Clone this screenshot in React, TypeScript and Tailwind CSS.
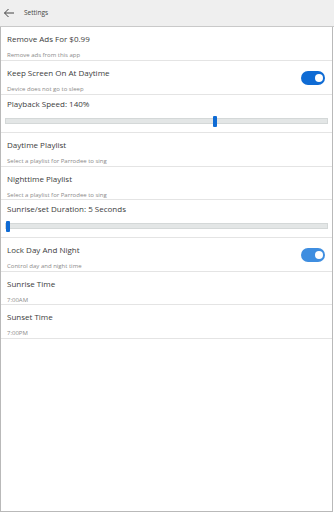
import React from "react";

type Row =
  | { kind: "text"; title: string; sub?: string; toggle?: "dark" | "light"; h: string }
  | { kind: "slider"; title: string; pos: number; h: string };

const rows: Row[] = [
  { kind: "text", title: "Remove Ads For $0.99", sub: "Remove ads from this app", h: "h-[34px]" },
  { kind: "text", title: "Keep Screen On At Daytime", sub: "Device does not go to sleep", toggle: "dark", h: "h-[34px]" },
  { kind: "slider", title: "Playback Speed: 140%", pos: 207, h: "h-[38px]" },
  { kind: "text", title: "Daytime Playlist", sub: "Select a playlist for Parrodee to sing", h: "h-[34px]" },
  { kind: "text", title: "Nighttime Playlist", sub: "Select a playlist for Parrodee to sing", h: "h-[33px]" },
  { kind: "slider", title: "Sunrise/set Duration: 5 Seconds", pos: 0, h: "h-[38px]" },
  { kind: "text", title: "Lock Day And Night", sub: "Control day and night time", toggle: "light", h: "h-[34px]" },
  { kind: "text", title: "Sunrise Time", sub: "7:00AM", h: "h-[33px]" },
  { kind: "text", title: "Sunset Time", sub: "7:00PM", h: "h-[34px]" },
];

function Toggle({ tone }: { tone: "dark" | "light" }) {
  return (
    <div
      className={
        tone === "dark"
          ? "flex items-center justify-end w-[24px] h-[14px] rounded-full bg-[#0f6bd4] pr-[2px]"
          : "flex items-center justify-end w-[24px] h-[14px] rounded-full bg-[#3f8ee0] pr-[2px]"
      }
    >
      <div className="w-[8px] h-[8px] rounded-full bg-white" />
    </div>
  );
}

function Slider({ pos }: { pos: number }) {
  return (
    <div className="relative mx-[4px] h-[6px] bg-[#e3e6e6] border border-[#d4d8d8]">
      <div
        className="absolute top-[-3px] w-[4px] h-[11px] bg-[#0f6bd4] rounded-[1px]"
        style={{ left: pos }}
      />
    </div>
  );
}

export default function App() {
  return (
    <div className="w-[334px] h-[512px] flex flex-col bg-white font-['Open_Sans',sans-serif] text-[#3c3c3c]">
      <div className="h-[27px] shrink-0 flex items-center bg-[#efefef] border-b border-[#c9c9c9]">
        <svg width="12" height="10" viewBox="0 0 12 10" className="ml-[3px]">
          <path d="M11 5H1.5M5.5 1L1.5 5l4 4" fill="none" stroke="#444" strokeWidth="1" />
        </svg>
        <span className="ml-[9px] text-[6.5px] text-[#444]">Settings</span>
      </div>
      <div className="flex-1 flex flex-col w-[333px] border-l border-r border-b border-[#b9b9b9]">
        {rows.map((r, i) =>
          r.kind === "text" ? (
            <div
              key={i}
              className={`${r.h} shrink-0 flex items-start justify-between pl-[6px] pr-[7px] pt-[6px] border-b border-[#e4e4e4]`}
            >
              <div className="flex flex-col">
                <span className="text-[8px] leading-[12px]">{r.title}</span>
                {r.sub && (
                  <span className="text-[6px] leading-[8px] mt-[6px] text-[#8a8a8a]">{r.sub}</span>
                )}
              </div>
              {r.toggle && (
                <div className="mt-[4px]">
                  <Toggle tone={r.toggle} />
                </div>
              )}
            </div>
          ) : (
            <div key={i} className={`${r.h} shrink-0 flex flex-col border-b border-[#e4e4e4]`}>
              <span className="pl-[6px] pt-[3px] text-[8px] leading-[12px]">{r.title}</span>
              <div className="mt-[8px]">
                <Slider pos={r.pos} />
              </div>
            </div>
          )
        )}
      </div>
    </div>
  );
}
